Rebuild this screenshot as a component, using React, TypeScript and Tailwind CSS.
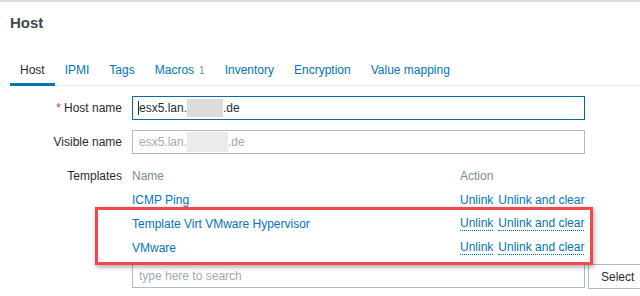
import React from 'react';

const tabs = ['Host', 'IPMI', 'Tags', 'Macros', 'Inventory', 'Encryption', 'Value mapping'];

const templates = [
  { name: 'ICMP Ping', marked: false },
  { name: 'Template Virt VMware Hypervisor', marked: true },
  { name: 'VMware', marked: true },
];

const App = () => {
  return (
    <div className="relative w-[640px] h-[296px] overflow-hidden bg-white text-[12px] text-[#1f2c33] font-['Liberation_Sans',Arial,sans-serif] border-t-2 border-[#d9dde0]">
      {/* Header */}
      <h1 className="px-[10px] pt-[12px] h-[56px] text-[15px] leading-[18px] font-bold text-[#3e4a52]">Host</h1>

      {/* Tabs */}
      <ul className="flex ml-[10px] border-b border-[#ebeef0]">
        {tabs.map((t, i) => (
          <li
            key={t}
            className={`px-[10px] pt-[5px] pb-[5px] leading-[14px] -mb-px border-b-[3px] whitespace-nowrap ${
              i === 0 ? 'border-[#0275b8] text-[#1f2c33]' : 'border-transparent text-[#0275b8]'
            }`}
          >
            {t}
            {t === 'Macros' && <span className="ml-[5px] text-[10px] text-[#768d99]">1</span>}
          </li>
        ))}
      </ul>

      {/* Form */}
      <div className="mt-[10px] grid grid-cols-[122px_453px] gap-x-[10px] gap-y-[10px]">
        <label className="flex items-center justify-end h-[24px] whitespace-nowrap">
          <span className="text-[#e33734] mr-[3px]">*</span>Host name
        </label>
        <div className="flex items-center h-[24px] px-[6px] border border-[#0b6a9e] bg-white">
          <span className="w-px h-[14px] bg-[#1f2c33] -ml-px" />
          esx5.lan.<span className="inline-block w-[36px] h-[18px] bg-[#dddcdb]" />.de
        </div>

        <label className="flex items-center justify-end h-[24px] whitespace-nowrap">Visible name</label>
        <div className="flex items-center h-[24px] px-[6px] border border-[#acbbc4] bg-white text-[#a3aab0]">
          esx5.lan.<span className="inline-block w-[41px] h-[20px] bg-[#ecebe9]" />.de
        </div>

        <label className="flex items-center justify-end h-[24px]">Templates</label>
        <div>
          <div className="flex h-[24px] items-center text-[#768d99]">
            <span className="w-[328px] shrink-0">Name</span>
            <span>Action</span>
          </div>
          {templates.map((tpl) => (
            <div key={tpl.name} className="flex h-[24px] items-center text-[#0275b8] whitespace-nowrap">
              <span className="w-[328px] shrink-0">{tpl.name}</span>
              <span
                className={`mr-[5px] ${tpl.marked ? 'border-b border-dotted border-[#0275b8] leading-[13px]' : ''}`}
              >
                Unlink
              </span>
              <span className={tpl.marked ? 'border-b border-dotted border-[#0275b8] leading-[13px]' : ''}>
                Unlink and clear
              </span>
            </div>
          ))}
          <div className="flex mt-[4px]">
            <div className="w-[453px] shrink-0 h-[24px] flex items-center px-[6px] border border-[#acbbc4] text-[#a3aab0]">
              type here to search
            </div>
            <button className="shrink-0 ml-[3px] h-[25px] px-[12px] border border-[#acbbc4] bg-white text-[#1f2c33]">
              Select
            </button>
          </div>
        </div>
      </div>

      {/* Red annotation box */}
      <div className="absolute left-[95px] top-[205px] w-[498px] h-[58px] border-[3px] border-[#f0474b] shadow-[1px_2px_5px_rgba(0,0,0,0.35)]" />
    </div>
  );
};

export default App;
